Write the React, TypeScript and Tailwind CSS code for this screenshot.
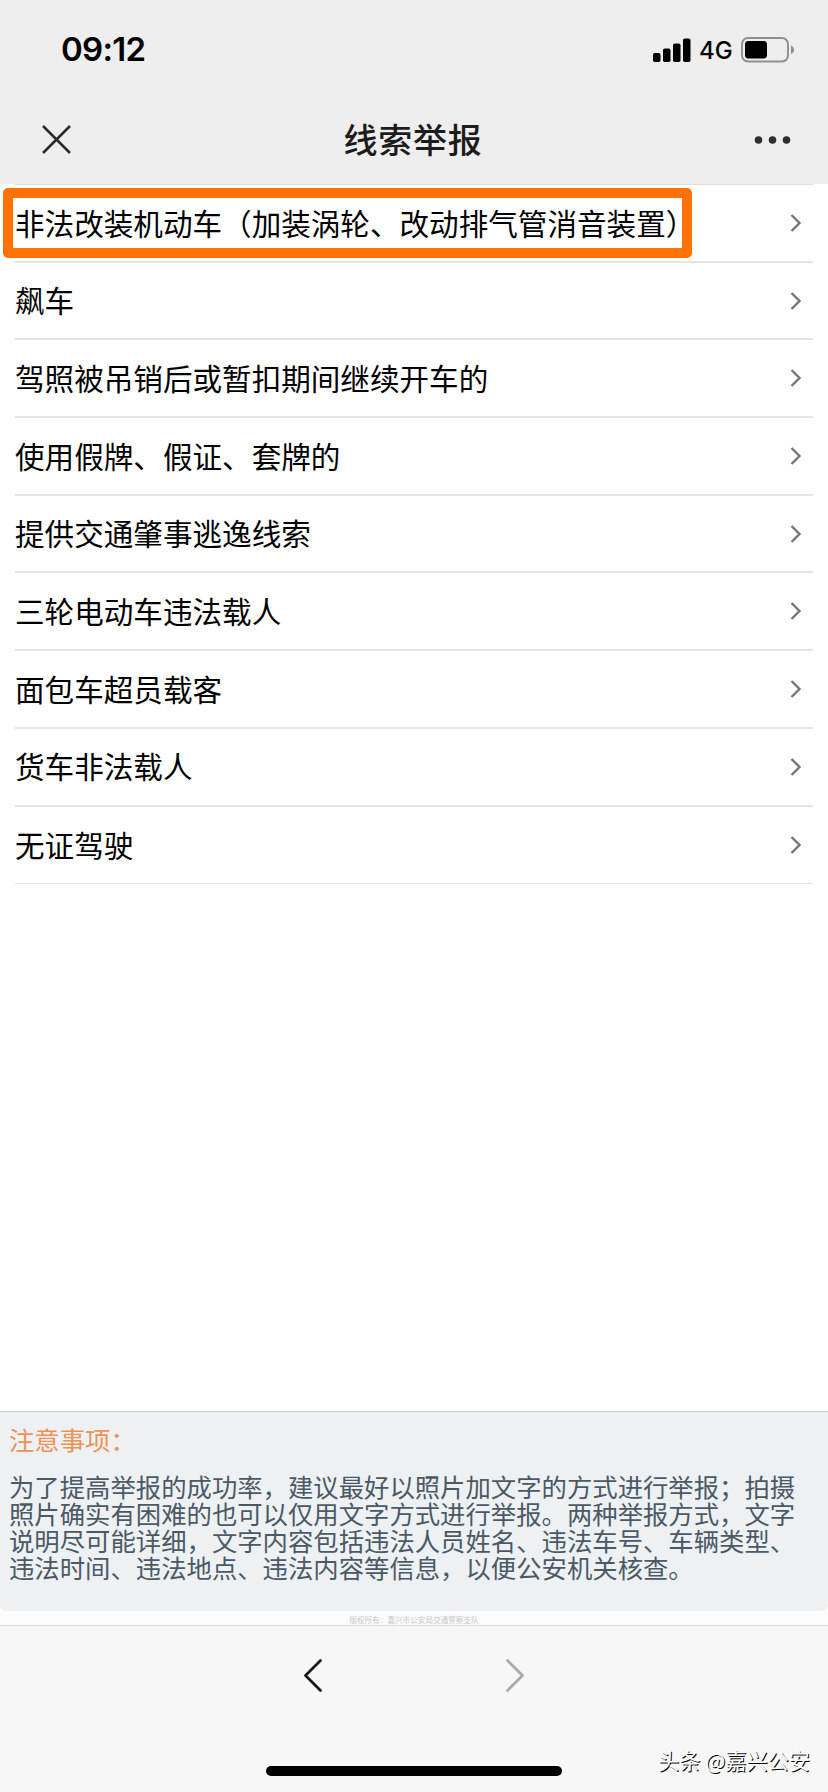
const ROWS = [
  '非法改装机动车（加装涡轮、改动排气管消音装置）',
  '飙车',
  '驾照被吊销后或暂扣期间继续开车的',
  '使用假牌、假证、套牌的',
  '提供交通肇事逃逸线索',
  '三轮电动车违法载人',
  '面包车超员载客',
  '货车非法载人',
  '无证驾驶',
]

const NOTICE = [
  '为了提高举报的成功率，建议最好以照片加文字的方式进行举报；拍摄',
  '照片确实有困难的也可以仅用文字方式进行举报。两种举报方式，文字',
  '说明尽可能详细，文字内容包括违法人员姓名、违法车号、车辆类型、',
  '违法时间、违法地点、违法内容等信息，以便公安机关核查。',
]

// ── Status bar ────────────────────────────────────────────────────────────────
function StatusBar() {
  return (
    <div className="flex h-[98px] items-center justify-between pl-[61px] pr-[33px] pt-px font-['Inter',sans-serif] text-black">
      <span className="text-[33px] font-semibold leading-none tracking-[-0.7px]">09:12</span>
      <div className="flex items-center">
        <svg width="38" height="24" viewBox="0 0 38 24">
          <rect x="0" y="15" width="7.5" height="9" rx="1.8" />
          <rect x="10" y="10.5" width="7.5" height="13.5" rx="1.8" />
          <rect x="20" y="5.5" width="7.5" height="18.5" rx="1.8" />
          <rect x="30" y="0.5" width="7.5" height="23.5" rx="1.8" />
        </svg>
        <span className="ml-[8px] w-[42px] pt-[3px] text-[24px] font-medium leading-none">4G</span>
        <svg width="54" height="26" viewBox="0 0 54 26">
          <rect x="1" y="1" width="46" height="23.5" rx="6" fill="none" stroke="#8f8f8f" strokeWidth="1.9" />
          <rect x="4" y="4" width="22" height="17.5" rx="3.4" />
          <path d="M50 8.500c2 .8 3 2.300 3 4.300s-1 3.500-3 4.300z" fill="#8f8f8f" />
        </svg>
      </div>
    </div>
  )
}

// ── Title bar ─────────────────────────────────────────────────────────────────
function TitleBar() {
  return (
    <div className="grid h-[86px] grid-cols-3 items-center pb-[3px] pl-[41px] pr-[37px]">
      <svg width="31" height="31" viewBox="0 0 31 31" fill="none" stroke="#2b2b2b" strokeWidth="2.5">
        <path d="M2 2l27 27M29 2L2 29" />
      </svg>
      <h1 className="whitespace-nowrap pb-px pr-[6px] text-center text-[34px] font-medium leading-none tracking-[0.8px] text-[#1c1c1c]">
        线索举报
      </h1>
      <svg className="justify-self-end" width="37" height="10" viewBox="0 0 37 10" fill="#2f2f2f">
        <circle cx="4.500" cy="5" r="3.8" />
        <circle cx="18.500" cy="5" r="3.8" />
        <circle cx="32.500" cy="5" r="3.8" />
      </svg>
    </div>
  )
}

function Row({ label, marked }: { label: string; marked: boolean }) {
  return (
    <li className="relative flex h-[77.7px] items-center justify-between border-b-2 border-[#e4e4e4] pr-[11px] last:border-b last:border-[#e2e2e2]">
      <span className="whitespace-nowrap pb-px text-[29.58px] leading-none">{label}</span>
      <svg width="12" height="20" viewBox="0 0 12 20" fill="none" stroke="#767676" strokeWidth="2.4">
        <path d="M1.500 2l8 8-8 8" />
      </svg>
      {marked && (
        <div className="pointer-events-none absolute -left-[12px] top-[3px] h-[70px] w-[689px] rounded-[5px] border-[10px] border-[#ff7207]" />
      )}
    </li>
  )
}

export default function App() {
  return (
    <div className="relative flex h-[1792px] w-[828px] flex-col overflow-hidden bg-white font-['Noto_Sans_CJK_SC',sans-serif] text-black">
      <header className="h-[184px] shrink-0 bg-[#eeeeee]">
        <StatusBar />
        <TitleBar />
      </header>

      <main className="flex-1">
        <ul className="ml-[15px] mr-[15px] border-t border-[#dedede]">
          {ROWS.map((label, i) => (
            <Row key={label} label={label} marked={i === 0} />
          ))}
        </ul>
      </main>

      <section className="h-[200px] shrink-0 rounded-b-[6px] border-t border-[#cfd3d6] bg-[#edf1f4] pl-[9px] pt-[14px]">
        <h2 className="text-[25.36px] leading-[27px] text-[#ee9154]">注意事项：</h2>
        <div className="mt-[20px] text-[25.36px] leading-[27.1px] text-[#4c5965]">
          {NOTICE.map(line => (
            <p key={line} className="whitespace-nowrap">{line}</p>
          ))}
        </div>
      </section>
      <p className="h-[14px] shrink-0 bg-[#fcfcfc] pt-[4px] text-center text-[7.6px] leading-[9px] text-[#c8c8c8]">
        版权所有：嘉兴市公安局交通警察支队
      </p>

      {/* Browser toolbar and home indicator */}
      <footer className="flex h-[167px] shrink-0 flex-col items-center justify-between border-t border-[#dcdcdc] bg-[#f7f7f7] pb-[16px] pt-[32px]">
        <div className="flex w-[222px] justify-between">
          <svg width="20" height="35" viewBox="0 0 20 35" fill="none" stroke="#161616" strokeWidth="2.8" strokeLinecap="round" strokeLinejoin="round">
            <path d="M17.500 2.500l-15 15 15 15" />
          </svg>
          <svg width="20" height="35" viewBox="0 0 20 35" fill="none" stroke="#aaaaaa" strokeWidth="2.8" strokeLinecap="round" strokeLinejoin="round">
            <path d="M2.500 2.500l15 15-15 15" />
          </svg>
        </div>
        <div className="h-[10px] w-[296px] rounded-full bg-black" />
      </footer>

      <span className="absolute bottom-[20px] right-[18px] whitespace-nowrap text-[21.2px] leading-[24px] text-white [text-shadow:1px_1px_0_#000]">
        头条 @嘉兴公安
      </span>
    </div>
  )
}
